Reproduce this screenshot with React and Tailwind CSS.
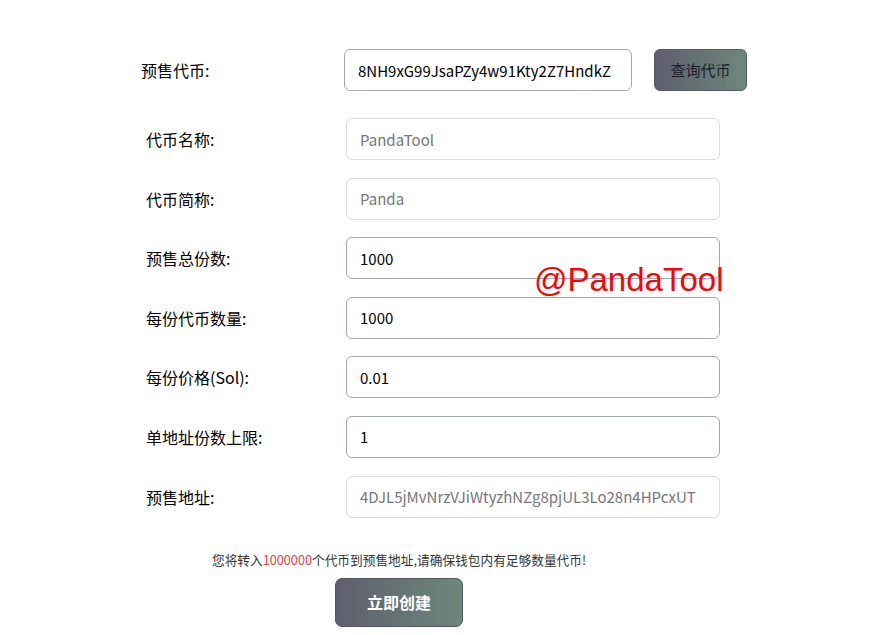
import React from "react";

const font = { fontFamily: "'Noto Sans CJK SC', 'Noto Sans', sans-serif" };

const rows = [
  { label: "代币名称:", value: "PandaTool", disabled: true },
  { label: "代币简称:", value: "Panda", disabled: true },
  { label: "预售总份数:", value: "1000" },
  { label: "每份代币数量:", value: "1000" },
  { label: "每份价格(Sol):", value: "0.01" },
  { label: "单地址份数上限:", value: "1" },
  { label: "预售地址:", value: "4DJL5jMvNrzVJiWtyzhNZg8pjUL3Lo28n4HPcxUT", disabled: true },
];

function Row({ label, value, disabled }) {
  return (
    <div className="flex items-center pl-[146px]">
      <span className="w-[200px] text-[16px] leading-[20px] text-black">{label}</span>
      <input
        readOnly
        value={value}
        className={
          "h-[42px] w-[374px] rounded-[6px] border bg-white px-[13px] text-[15px] outline-none " +
          (disabled
            ? "border-[#dcdce3] text-[#76767c]"
            : "border-[#a4a7b8] text-black")
        }
        style={font}
      />
    </div>
  );
}

export default function App() {
  return (
    <div className="relative min-h-[635px] bg-white" style={font}>
      <div className="flex flex-col pt-[49px]">
        <div className="flex items-center pl-[141px]">
          <span className="w-[203px] text-[16px] leading-[20px] text-black">预售代币:</span>
          <input
            readOnly
            value="8NH9xG99JsaPZy4w91Kty2Z7HndkZ"
            className="h-[42px] w-[288px] rounded-[6px] border border-[#a4a7b8] bg-white px-[13px] text-[15px] text-black outline-none"
            style={font}
          />
          <button className="ml-[22px] h-[42px] w-[93px] rounded-[6px] border border-[#5a5a66] bg-gradient-to-r from-[#5f5e6e] to-[#6c887a] text-[15px] text-[#1c1c24]">
            查询代币
          </button>
        </div>

        <div className="mt-[27px] flex flex-col gap-[17.6px]">
          {rows.map((r) => (
            <Row key={r.label} {...r} />
          ))}
        </div>

        <div className="ml-[212px] mt-[34px] flex w-[374px] flex-col items-center">
          <p className="whitespace-nowrap text-[12.7px] leading-[16px] text-[#333]">
            您将转入<span className="text-[#ee4040]">1000000</span>个代币到预售地址,请确保钱包内有足够数量代币!
          </p>
          <button className="mt-[10px] h-[49px] w-[128px] rounded-[7px] border border-[#55555f] bg-gradient-to-r from-[#5f5e6e] to-[#6c887a] text-[16px] font-bold text-white">
            立即创建
          </button>
        </div>
      </div>

      <div
        className="pointer-events-none absolute left-[534px] top-[260px] text-[33px] leading-[40px] text-[#ff0000]"
        style={{ fontFamily: "'Liberation Sans', Arial, sans-serif" }}
      >
        @PandaTool
      </div>
    </div>
  );
}
